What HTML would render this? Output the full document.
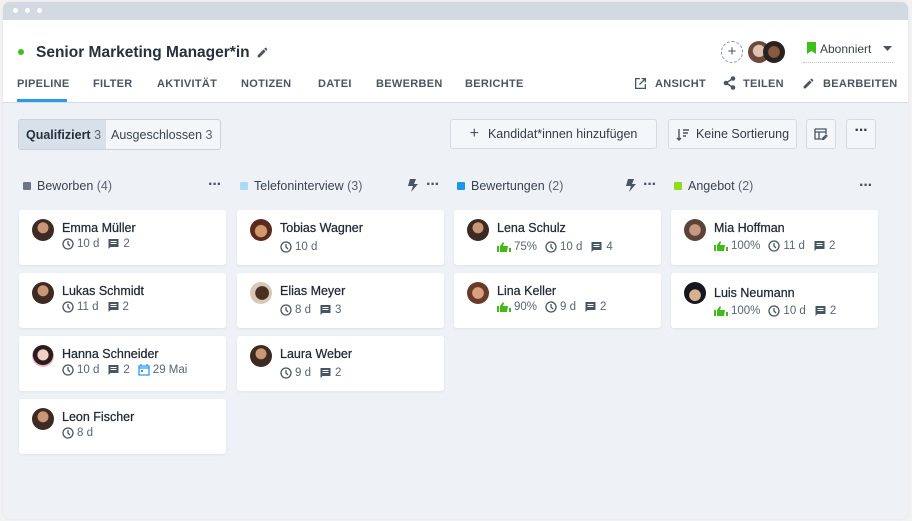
<!DOCTYPE html>
<html><head><meta charset="utf-8"><style>
*{box-sizing:border-box;margin:0;padding:0}
body{width:912px;height:521px;background:#f2f2f5;font-family:"Liberation Sans",sans-serif;color:#2c3440;position:relative;overflow:hidden}
.win{position:absolute;left:3px;top:2px;width:905px;height:517px;border-radius:7px;overflow:hidden;background:#eef2f6;box-shadow:0 0 2px rgba(0,0,0,.08)}
.bar{position:absolute;left:0;top:0;width:100%;height:18px;background:#d3d9e0}
.dot{position:absolute;top:6px;width:5px;height:5px;border-radius:50%;background:#fff}
.hdr{position:absolute;left:0;top:18px;width:100%;height:83px;background:#fff;border-bottom:1px solid #d5dde4}
.a{position:absolute;white-space:nowrap}
.tab{position:absolute;top:58px;font-size:11px;font-weight:bold;letter-spacing:.3px;color:#4a5563}
.btn{position:absolute;top:117px;height:30px;border:1px solid #d3dbe3;border-radius:3px;background:#f4f7f9;font-size:12.5px;color:#333c48;display:flex;align-items:center;justify-content:center}
.col{position:absolute;top:177px;font-size:12.5px;color:#3a4350}
.sq{display:inline-block;width:8px;height:8px;border-radius:1px;margin-right:6px;vertical-align:0}
.card{position:absolute;width:207px;height:55px;background:#fff;border-radius:3px;box-shadow:0 1px 2px rgba(40,60,90,.08)}
.av{position:absolute;left:13px;top:9px;width:22px;height:22px;border-radius:50%;background:radial-gradient(circle at 50% 40%,#c99678 0 30%,#3d2a22 34%)}
.nm{position:absolute;left:43px;top:11px;font-size:12.5px;color:#222a35;-webkit-text-stroke:.25px #222a35}
.mt{position:absolute;left:43px;top:28px;font-size:11.5px;color:#5a6472;display:flex;align-items:center;gap:3px}
.mt svg{flex:none}
.g{margin-left:5px}
.dots{position:absolute;font-size:16px;font-weight:bold;color:#4a5563;letter-spacing:-1px;line-height:10px}
</style></head><body>
<div class="win">
<div class="bar"><div class="dot" style="left:10px"></div><div class="dot" style="left:22px"></div><div class="dot" style="left:34px"></div></div>
<div class="hdr">
<div class="a" style="left:15px;top:29px;width:6px;height:6px;border-radius:50%;background:#3fbf1d"></div>
<div class="a" style="left:33px;top:24px;font-size:15.5px;font-weight:bold;color:#27303c">Senior Marketing Manager*in</div>
<svg class="a" style="left:253px;top:26px" width="13" height="13" viewBox="0 0 24 24"><path fill="#4a5563" d="M3 17.25V21h3.75L17.8 9.94l-3.75-3.75L3 17.25zM20.7 7.04a1 1 0 000-1.41l-2.34-2.34a1 1 0 00-1.41 0l-1.83 1.83 3.75 3.75 1.83-1.83z"/></svg>
<div class="a" style="left:718px;top:21px;width:22px;height:22px;border-radius:50%;border:1px dashed #8a94a0;text-align:center;line-height:19px;font-size:15px;color:#4a5563">+</div>
<div class="a" style="left:745px;top:21px;width:22px;height:22px;border-radius:50%;background:radial-gradient(circle at 50% 45%,#e0c2b0 0 35%,#6b4a3c 40%)"></div>
<div class="a" style="left:760px;top:21px;width:22px;height:22px;border-radius:50%;background:radial-gradient(circle at 50% 50%,#8a5a40 0 35%,#2a2220 40%)"></div>
<svg class="a" style="left:804px;top:22px" width="9" height="12" viewBox="0 0 9 12"><path fill="#3fbf1d" d="M0 0h9v12L4.5 9 0 12z"/></svg>
<div class="a" style="left:817px;top:22px;font-size:12px;color:#3a4350">Abonniert</div>
<svg class="a" style="left:880px;top:26px" width="9" height="5"><path fill="#4a5563" d="M0 0h9L4.5 5z"/></svg>
<div class="a" style="left:800px;top:42px;width:90px;border-top:1px dotted #b8c0c8"></div>
<div class="tab" style="left:14px">PIPELINE</div>
<div class="tab" style="left:90px">FILTER</div>
<div class="tab" style="left:154px">AKTIVITÄT</div>
<div class="tab" style="left:238px">NOTIZEN</div>
<div class="tab" style="left:315px">DATEI</div>
<div class="tab" style="left:373px">BEWERBEN</div>
<div class="tab" style="left:462px">BERICHTE</div>
<div class="a" style="left:14px;top:79px;width:50px;height:3px;background:#2a9bea"></div>
<svg class="a" style="left:631px;top:57px" width="13" height="13" viewBox="0 0 24 24"><path fill="none" stroke="#4a5563" stroke-width="2.4" d="M11 3H3v18h18v-8M14 3h7v7M21 3L10 14"/></svg>
<div class="tab" style="left:652px">ANSICHT</div>
<svg class="a" style="left:720px;top:56px" width="13" height="14" viewBox="0 0 13 14"><circle cx="10" cy="2.5" r="2.3" fill="#4a5563"/><circle cx="3" cy="7" r="2.3" fill="#4a5563"/><circle cx="10" cy="11.5" r="2.3" fill="#4a5563"/><path stroke="#4a5563" stroke-width="1.4" fill="none" d="M10 2.5L3 7l7 4.5"/></svg>
<div class="tab" style="left:740px">TEILEN</div>
<svg class="a" style="left:799px;top:57px" width="13" height="13" viewBox="0 0 24 24"><path fill="#4a5563" d="M3 17.25V21h3.75L17.8 9.94l-3.75-3.75L3 17.25zM20.7 7.04a1 1 0 000-1.41l-2.34-2.34a1 1 0 00-1.41 0l-1.83 1.83 3.75 3.75 1.83-1.83z"/></svg>
<div class="tab" style="left:820px">BEARBEITEN</div>
</div>
<div class="a" style="left:15px;top:117px;width:203px;height:31px;border:1px solid #c9d3dc;border-radius:3px;background:#f4f7f9;display:flex;font-size:12.5px;overflow:hidden">
<div style="width:87px;background:#d8e1e9;display:flex;align-items:center;padding-left:7px;color:#27303c;font-weight:bold">Qualifiziert&nbsp;<span style="font-weight:normal;color:#5a6472">3</span></div>
<div style="display:flex;align-items:center;padding-left:5px;color:#3a4350">Ausgeschlossen&nbsp;<span style="color:#5a6472">3</span></div>
</div>
<div class="btn" style="left:447px;width:207px"><span style="font-size:16px;margin-right:9px;color:#4a5563">+</span>Kandidat*innen hinzufügen</div>
<div class="btn" style="left:665px;width:129px"><svg width="14" height="13" viewBox="0 0 14 13" style="margin-right:6px"><path stroke="#4a5563" stroke-width="1.4" fill="none" d="M3 1v11M1 10l2 2 2-2M7 2h6M7 5h5M7 8h3"/></svg>Keine Sortierung</div>
<div class="btn" style="left:803px;width:30px"><svg width="14" height="12" viewBox="0 0 14 12"><path stroke="#4a5563" stroke-width="1.3" fill="none" d="M1 1h11v5M1 1v10h6M1 4h11M5 4v7M8 11l4-4 1 1-4 4H8z"/></svg></div>
<div class="btn" style="left:843px;width:30px;font-weight:bold;font-size:16px;letter-spacing:-1px;padding-bottom:6px">···</div>
<div class="col" style="left:20px"><span class="sq" style="background:#6b7785"></span>Beworben <span style="color:#5a6472">(4)</span></div>
<div class="dots" style="left:205px;top:178px">···</div>
<div class="col" style="left:237px"><span class="sq" style="background:#a8dcf5"></span>Telefoninterview <span style="color:#5a6472">(3)</span></div>
<svg class="a" style="left:405px;top:177px" width="10" height="13" viewBox="0 0 10 13"><path fill="#4a5563" d="M2 0h6L6 5h4l-7 8 2-6H0z"/></svg>
<div class="dots" style="left:423px;top:178px">···</div>
<div class="col" style="left:454px"><span class="sq" style="background:#1c97e5"></span>Bewertungen <span style="color:#5a6472">(2)</span></div>
<svg class="a" style="left:623px;top:177px" width="10" height="13" viewBox="0 0 10 13"><path fill="#4a5563" d="M2 0h6L6 5h4l-7 8 2-6H0z"/></svg>
<div class="dots" style="left:640px;top:178px">···</div>
<div class="col" style="left:671px"><span class="sq" style="background:#8fdc1a"></span>Angebot <span style="color:#5a6472">(2)</span></div>
<div class="dots" style="left:856px;top:179px">···</div>

<svg width="0" height="0" style="position:absolute"><defs>
<symbol id="clk" viewBox="0 0 12 12"><circle cx="6" cy="6" r="5" fill="none" stroke="#4a5563" stroke-width="1.3"/><path d="M6 3v3l2 2" fill="none" stroke="#4a5563" stroke-width="1.3"/></symbol>
<symbol id="cmt" viewBox="0 0 12 12"><path fill="#4a5563" d="M1 1h10v8H3l-2 2zM3 3v1h6V3zm0 2v1h6V5z" fill-rule="evenodd"/></symbol>
<symbol id="cal" viewBox="0 0 12 12"><path fill="none" stroke="#2a9bea" stroke-width="1.3" d="M1 2h10v9H1zM1 4h10M3 0v2M9 0v2"/><rect x="3" y="6" width="2" height="2" fill="#2a9bea"/></symbol>
<symbol id="thb" viewBox="0 0 14 12"><path fill="#45b81c" d="M0 5h2v6H0zM3 5l3-4 1 1-1 3h5l-1 6H3zM12 7h2v4h-2z"/></symbol>
</defs></svg>

<!-- col1 -->
<div class="card" style="left:16px;top:208px"><div class="av"></div><div class="nm">Emma Müller</div><div class="mt"><svg width="12" height="12"><use href="#clk"/></svg>10 d<svg class="g" width="13" height="12"><use href="#cmt"/></svg>2</div></div>
<div class="card" style="left:16px;top:271px"><div class="av"></div><div class="nm">Lukas Schmidt</div><div class="mt"><svg width="12" height="12"><use href="#clk"/></svg>11 d<svg class="g" width="13" height="12"><use href="#cmt"/></svg>2</div></div>
<div class="card" style="left:16px;top:334px"><div class="av" style="background:radial-gradient(circle at 50% 45%,#f0d0c4 0 32%,#2a1e1c 36% 60%,#f2b6c6 64%)"></div><div class="nm">Hanna Schneider</div><div class="mt"><svg width="12" height="12"><use href="#clk"/></svg>10 d<svg class="g" width="13" height="12"><use href="#cmt"/></svg>2<svg class="g" width="12" height="12"><use href="#cal"/></svg>29 Mai</div></div>
<div class="card" style="left:16px;top:397px"><div class="av"></div><div class="nm">Leon Fischer</div><div class="mt"><svg width="12" height="12"><use href="#clk"/></svg>8 d</div></div>
<!-- col2 -->
<div class="card" style="left:234px;top:208px"><div class="av" style="background:radial-gradient(circle at 50% 55%,#d29a6a 0 35%,#5a2a20 40%)"></div><div class="nm">Tobias Wagner</div><div class="mt" style="top:31px"><svg width="12" height="12"><use href="#clk"/></svg>10 d</div></div>
<div class="card" style="left:234px;top:271px"><div class="av" style="background:radial-gradient(circle at 55% 50%,#4a3020 0 40%,#d8c8b8 44%)"></div><div class="nm">Elias Meyer</div><div class="mt" style="top:31px"><svg width="12" height="12"><use href="#clk"/></svg>8 d<svg class="g" width="13" height="12"><use href="#cmt"/></svg>3</div></div>
<div class="card" style="left:234px;top:334px"><div class="av"></div><div class="nm">Laura Weber</div><div class="mt" style="top:31px"><svg width="12" height="12"><use href="#clk"/></svg>9 d<svg class="g" width="13" height="12"><use href="#cmt"/></svg>2</div></div>
<!-- col3 -->
<div class="card" style="left:451px;top:208px"><div class="av"></div><div class="nm">Lena Schulz</div><div class="mt" style="top:31px"><svg width="14" height="12"><use href="#thb"/></svg>75%<svg class="g" width="12" height="12"><use href="#clk"/></svg>10 d<svg class="g" width="13" height="12"><use href="#cmt"/></svg>4</div></div>
<div class="card" style="left:451px;top:271px"><div class="av" style="background:radial-gradient(circle at 50% 50%,#d8a080 0 35%,#6a3a28 40%)"></div><div class="nm">Lina Keller</div><div class="mt"><svg width="14" height="12"><use href="#thb"/></svg>90%<svg class="g" width="12" height="12"><use href="#clk"/></svg>9 d<svg class="g" width="13" height="12"><use href="#cmt"/></svg>2</div></div>
<!-- col4 -->
<div class="card" style="left:668px;top:208px"><div class="av" style="background:radial-gradient(circle at 50% 50%,#c89880 0 35%,#5a4438 40%)"></div><div class="nm">Mia Hoffman</div><div class="mt" style="top:30px"><svg width="14" height="12"><use href="#thb"/></svg>100%<svg class="g" width="12" height="12"><use href="#clk"/></svg>11 d<svg class="g" width="13" height="12"><use href="#cmt"/></svg>2</div></div>
<div class="card" style="left:668px;top:271px"><div class="av" style="background:radial-gradient(circle at 50% 60%,#d8b090 0 32%,#151820 36%)"></div><div class="nm" style="top:13px">Luis Neumann</div><div class="mt" style="top:32px"><svg width="14" height="12"><use href="#thb"/></svg>100%<svg class="g" width="12" height="12"><use href="#clk"/></svg>10 d<svg class="g" width="13" height="12"><use href="#cmt"/></svg>2</div></div>
</div>
</body></html>
